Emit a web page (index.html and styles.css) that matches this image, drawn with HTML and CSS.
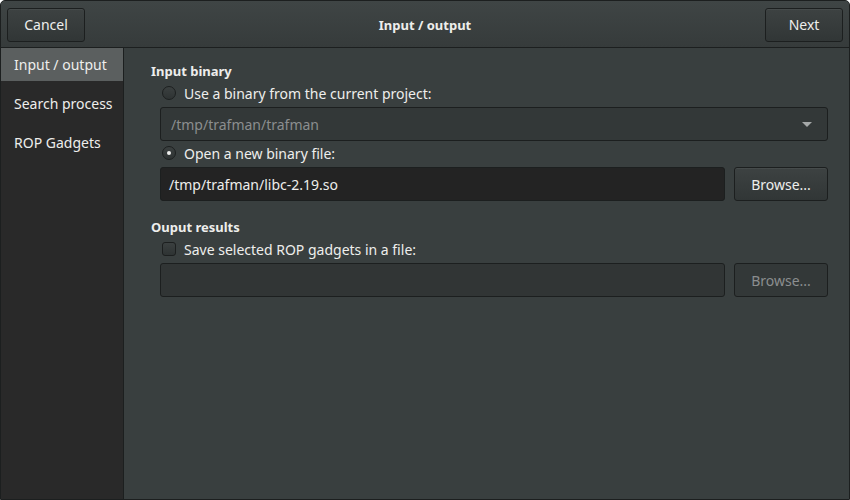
FILE: index.html
```html
<!DOCTYPE html>
<html lang="en">
<head>
    <meta charset="UTF-8">
    <title>Input / output</title>
    <link rel="stylesheet" href="styles.css">
</head>
<body>
    <div class="window">
        <div class="header">
            <button class="btn">Cancel</button>
            <div class="title">Input / output</div>
            <button class="btn">Next</button>
        </div>
        <div class="main">
            <div class="sidebar">
                <ul>
                    <li class="active">Input / output</li>
                    <li>Search process</li>
                    <li>ROP Gadgets</li>
                </ul>
            </div>
            <div class="content">
                <div class="section">
                    <h3>Input binary</h3>
                    <div class="option">
                        <span class="radio"></span>
                        <span>Use a binary from the current project:</span>
                    </div>
                    <div class="row">
                        <div class="combo">
                            <span>/tmp/trafman/trafman</span>
                            <span class="arrow"></span>
                        </div>
                    </div>
                    <div class="option">
                        <span class="radio checked"></span>
                        <span>Open a new binary file:</span>
                    </div>
                    <div class="row">
                        <div class="entry">/tmp/trafman/libc-2.19.so</div>
                        <button class="btn browse">Browse...</button>
                    </div>
                </div>
                <div class="section">
                    <h3>Ouput results</h3>
                    <div class="option">
                        <span class="check"></span>
                        <span>Save selected ROP gadgets in a file:</span>
                    </div>
                    <div class="row">
                        <div class="entry disabled"></div>
                        <button class="btn browse disabled">Browse...</button>
                    </div>
                </div>
            </div>
        </div>
    </div>
</body>
</html>
```

FILE: styles.css
```css
html, body {
    margin: 0;
    padding: 0;
    background-color: #ffffff;
}
body {
    font-family: "Noto Sans", "Open Sans", sans-serif;
    font-size: 13px;
    color: #eeeeec;
}
.window {
    width: 850px;
    height: 500px;
    box-sizing: border-box;
    border: 1px solid #1c1f1f;
    border-radius: 5px 5px 0 0;
    overflow: hidden;
    background-color: #393f3f;
    display: flex;
    flex-direction: column;
}
.header {
    height: 46px;
    flex-shrink: 0;
    display: flex;
    align-items: center;
    justify-content: space-between;
    padding: 0 6px;
    background: linear-gradient(#3f4545, #363b3b);
    border-bottom: 1px solid #1c1f1f;
}
.title {
    font-weight: bold;
    font-size: 13px;
    margin-top: 2px;
}
.btn {
    font-family: inherit;
    font-size: 14px;
    color: #eeeeec;
    height: 34px;
    padding: 0 16px;
    border: 1px solid #1c1f1f;
    border-radius: 3px;
    background: linear-gradient(#3d4242, #313636);
    box-shadow: inset 0 1px rgba(255, 255, 255, 0.05);
}
.header .btn {
    width: 78px;
    margin-top: 1px;
}
.main {
    flex: 1;
    display: flex;
}
.sidebar {
    width: 122px;
    background-color: #292929;
    border-right: 1px solid #1c1f1f;
}
.sidebar ul {
    list-style-type: none;
    margin: 0;
    padding: 0;
}
.sidebar ul li {
    height: 39px;
    line-height: 36px;
    padding-left: 13px;
    font-size: 14px;
}
.sidebar ul li.active {
    height: 33px;
    line-height: 33px;
    background-color: #5b5f5f;
    margin-bottom: 5px;
}
.content {
    flex: 1;
    padding: 14px 21px 0 27px;
}
.section {
    margin-bottom: 17px;
}
.section h3 {
    margin: 0 0 2px 0;
    font-size: 13px;
    font-weight: bold;
    height: 18px;
    line-height: 18px;
}
.option {
    display: flex;
    align-items: center;
    gap: 8px;
    height: 22px;
    margin-left: 11px;
    font-size: 14px;
}
.radio, .check {
    width: 14px;
    height: 14px;
    box-sizing: border-box;
    border: 1px solid #1c1f1f;
    background: linear-gradient(#3b4040, #2e3333);
    position: relative;
}
.radio {
    border-radius: 50%;
}
.check {
    border-radius: 3px;
}
.radio.checked::after {
    content: "";
    position: absolute;
    left: 4px;
    top: 4px;
    width: 4px;
    height: 4px;
    border-radius: 50%;
    background-color: #eeeeec;
}
.row {
    display: flex;
    gap: 9px;
    margin: 3px 0 1px 9px;
}
.combo, .entry {
    height: 34px;
    box-sizing: border-box;
    border: 1px solid #1c1f1f;
    border-radius: 3px;
    display: flex;
    align-items: center;
    font-size: 14px;
}
.combo {
    flex: 1;
    background-color: #333838;
    color: #8b8e8f;
    justify-content: space-between;
    padding: 0 15px 0 10px;
}
.arrow {
    width: 0;
    height: 0;
    border-left: 5px solid transparent;
    border-right: 5px solid transparent;
    border-top: 5px solid #a5a8a8;
}
.entry {
    flex: 1;
    background-color: #232323;
    padding: 0 8px;
}
.entry.disabled {
    background-color: #313535;
}
.btn.browse {
    width: 94px;
    padding: 0;
}
.btn.disabled {
    color: #8b8e8f;
    background: #333838;
    box-shadow: none;
}
```
